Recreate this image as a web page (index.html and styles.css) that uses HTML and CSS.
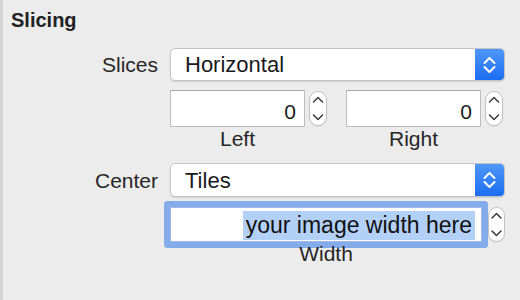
FILE: index.html
```html
<!DOCTYPE html>
<html>
<head>
  <title>Slicing</title>
  <link rel="stylesheet" href="styles.css">
</head>
<body>
  <div class="inspector">
    <h2 class="section-title">Slicing</h2>

    <div class="row row-slices">
      <span class="field-label">Slices</span>
      <div class="popup">
        <span class="popup-value">Horizontal</span>
        <span class="popup-arrows">
          <svg width="13" height="20" viewBox="0 0 13 20"><path d="M1.5 8 L6.5 3 L11.5 8 M1.5 12 L6.5 17 L11.5 12" fill="none" stroke="#fff" stroke-width="2" stroke-linecap="round" stroke-linejoin="round"/></svg>
        </span>
      </div>
    </div>

    <div class="row row-insets">
      <span></span>
      <div class="insets">
        <div class="inset">
          <div class="stepper-field">
            <div class="number-field">0</div>
            <span class="stepper">
              <svg width="18" height="35" viewBox="0 0 18 35"><path d="M4.5 11 L9 6.5 L13.5 11 M4.5 24 L9 28.5 L13.5 24" fill="none" stroke="#3a3a3a" stroke-width="1.5" stroke-linecap="round" stroke-linejoin="round"/></svg>
            </span>
          </div>
          <span class="caption">Left</span>
        </div>
        <div class="inset">
          <div class="stepper-field">
            <div class="number-field">0</div>
            <span class="stepper">
              <svg width="18" height="35" viewBox="0 0 18 35"><path d="M4.5 11 L9 6.5 L13.5 11 M4.5 24 L9 28.5 L13.5 24" fill="none" stroke="#3a3a3a" stroke-width="1.5" stroke-linecap="round" stroke-linejoin="round"/></svg>
            </span>
          </div>
          <span class="caption">Right</span>
        </div>
      </div>
    </div>

    <div class="row row-center">
      <span class="field-label">Center</span>
      <div class="popup">
        <span class="popup-value">Tiles</span>
        <span class="popup-arrows">
          <svg width="13" height="20" viewBox="0 0 13 20"><path d="M1.5 8 L6.5 3 L11.5 8 M1.5 12 L6.5 17 L11.5 12" fill="none" stroke="#fff" stroke-width="2" stroke-linecap="round" stroke-linejoin="round"/></svg>
        </span>
      </div>
    </div>

    <div class="row row-width">
      <span></span>
      <div class="inset inset-wide">
        <div class="stepper-field">
          <div class="text-field focused"><span class="selection">your image width here</span></div>
          <span class="stepper">
            <svg width="17" height="35" viewBox="0 0 17 35"><path d="M4 11 L8.5 6.5 L13 11 M4 24 L8.5 28.5 L13 24" fill="none" stroke="#3a3a3a" stroke-width="1.5" stroke-linecap="round" stroke-linejoin="round"/></svg>
          </span>
        </div>
        <span class="caption">Width</span>
      </div>
    </div>
  </div>
</body>
</html>
```

FILE: styles.css
```css
/* Reset */
*,
*::before,
*::after {
  box-sizing: border-box;
  margin: 0;
  padding: 0;
}

body {
  font-family: "Liberation Sans", Arial, sans-serif;
  background-color: #ececec;
  color: #262626;
}

/* Inspector panel */
.inspector {
  min-height: 300px;
  border-left: 3px solid #d4d4d4;
  padding-top: 9px;
}

.section-title {
  font-size: 20px;
  font-weight: bold;
  line-height: 23px;
  padding-left: 8px;
  color: #222;
}

/* Rows */
.row {
  display: grid;
  grid-template-columns: 155px 335px;
  column-gap: 12px;
  align-items: center;
}

.row-slices { margin-top: 16px; }
.row-insets { margin-top: 9px; align-items: start; }
.row-center { margin-top: 13px; }
.row-width { margin-top: 10px; align-items: start; }

.field-label {
  font-size: 21px;
  line-height: 23px;
  text-align: right;
}

/* Popup button */
.popup {
  display: flex;
  align-items: center;
  height: 33px;
  background-color: #fff;
  border: 1px solid #c4c4c4;
  border-radius: 5px;
  box-shadow: 0 1px 1px rgba(0, 0, 0, 0.12);
  overflow: hidden;
}

.row-center .popup {
  height: 34px;
}

.popup-value {
  flex: 1;
  font-size: 22px;
  line-height: 23px;
  padding-left: 14px;
  color: #1a1a1a;
}

.popup-arrows {
  display: flex;
  align-items: center;
  justify-content: center;
  align-self: stretch;
  width: 29px;
  background: linear-gradient(#4f97f8, #1c6ef2);
}

/* Number fields */
.insets {
  display: grid;
  grid-template-columns: 157px 157px;
  column-gap: 19px;
}

.inset {
  display: flex;
  flex-direction: column;
}

.stepper-field {
  display: flex;
  align-items: center;
  gap: 4px;
}

.number-field {
  flex: 1;
  height: 37px;
  display: flex;
  align-items: center;
  justify-content: flex-end;
  padding: 6px 8px 0 0;
  background-color: #fff;
  border: 1px solid #bdbdbd;
  border-top-color: #a9a9a9;
  font-size: 21px;
  line-height: 23px;
  color: #1a1a1a;
}

.stepper {
  display: flex;
  width: 18px;
  height: 35px;
  background-color: #fff;
  border: 1px solid #c2c2c2;
  border-radius: 9px;
  box-shadow: 0 1px 1px rgba(0, 0, 0, 0.08);
}

.stepper svg {
  margin: -1px;
}

.caption {
  font-size: 21px;
  line-height: 23px;
  text-align: center;
  padding-right: 22px;
}

/* Width field (focused) */
.inset-wide .stepper-field {
  gap: 6px;
}

.inset-wide .stepper {
  width: 17px;
}

.inset-wide .caption {
  padding-right: 23px;
}

.text-field {
  flex: 1;
  height: 35px;
  display: flex;
  align-items: flex-start;
  justify-content: flex-end;
  padding: 3px 6px 0 0;
  background-color: #fff;
  border: 1px solid #9fb9e6;
  border-radius: 1px;
}

.text-field.focused {
  box-shadow: 0 0 0 6px #84abea;
}

.selection {
  display: inline-block;
  background-color: #b3d0f7;
  font-size: 23px;
  line-height: 29px;
  padding: 0 3px;
  color: #111;
}
```
